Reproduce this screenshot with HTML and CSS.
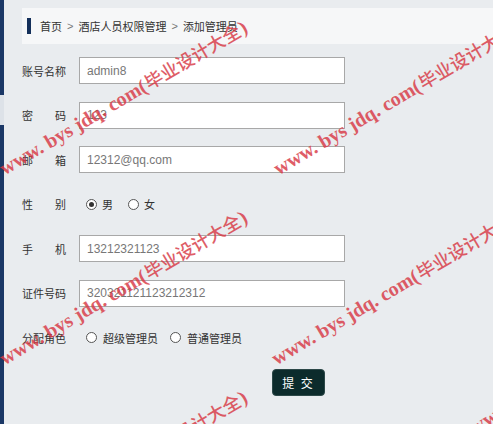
FILE: index.html
```html
<!DOCTYPE html>
<html lang="zh-CN">
<head>
<meta charset="utf-8">
<title>添加管理员</title>
<link rel="stylesheet" href="styles.css">
</head>
<body>
<div class="page">
  <div class="strip">
    <div class="strip-top"></div>
    <div class="strip-gap"></div>
    <div class="strip-bottom"></div>
  </div>
  <div class="main">
    <div class="crumbs">
      <span class="crumb-mark"></span>
      <span>首页</span><span class="sep">&gt;</span><span>酒店人员权限管理</span><span class="sep">&gt;</span><span>添加管理员</span>
    </div>
    <form class="form">
      <div class="row">
        <label class="lbl">账号名称</label>
        <input class="field" type="text" value="admin8">
      </div>
      <div class="row">
        <label class="lbl">密码</label>
        <input class="field" type="text" value="123">
      </div>
      <div class="row">
        <label class="lbl">邮箱</label>
        <input class="field" type="text" value="12312@qq.com">
      </div>
      <div class="row">
        <label class="lbl">性别</label>
        <div class="choices">
          <span class="radio checked"></span><span class="opt">男</span>
          <span class="radio"></span><span class="opt">女</span>
        </div>
      </div>
      <div class="row">
        <label class="lbl">手机</label>
        <input class="field" type="text" value="13212321123">
      </div>
      <div class="row">
        <label class="lbl">证件号码</label>
        <input class="field" type="text" value="320321121123212312">
      </div>
      <div class="row">
        <label class="lbl">分配角色</label>
        <div class="choices roles">
          <span class="radio"></span><span class="opt">超级管理员</span>
          <span class="radio"></span><span class="opt">普通管理员</span>
        </div>
      </div>
      <div class="actions">
        <button class="submit" type="button">提 交</button>
      </div>
    </form>
  </div>
  <div class="watermarks">
    <span class="wm wm-a">www. bys jdq. com(<span class="cjk">毕业设计大全</span>)</span>
    <span class="wm wm-b">www. bys jdq. com(<span class="cjk">毕业设计大全</span>)</span>
    <span class="wm wm-c">www. bys jdq. com(<span class="cjk">毕业设计大全</span>)</span>
    <span class="wm wm-d">www. bys jdq. com(<span class="cjk">毕业设计大全</span>)</span>
    <span class="wm wm-e">www. bys jdq. com(<span class="cjk">毕业设计大全</span>)</span>
    <span class="wm wm-f">www. bys jdq. com(<span class="cjk">毕业设计大全</span>)</span>
  </div>
</div>
</body>
</html>
```
FILE: styles.css
```css
html, body {
  margin: 0;
  padding: 0;
}
body {
  width: 493px;
  height: 424px;
  overflow: hidden;
  background: #e9ecef;
  font-family: "Noto Sans CJK SC", "Liberation Sans", sans-serif;
  font-size: 11px;
  color: #333;
}
.page {
  position: relative;
  display: flex;
  width: 493px;
  height: 424px;
  overflow: hidden;
}
.strip {
  width: 4px;
  display: flex;
  flex-direction: column;
  flex-shrink: 0;
}
.strip-top {
  height: 95px;
  background: #1b3866;
}
.strip-gap {
  height: 30px;
  background: #dde2e8;
}
.strip-bottom {
  flex: 1;
  background: #1b3866;
}
.main {
  flex: 1;
  padding: 8px 0 0 18px;
}
.crumbs {
  height: 36px;
  background: #f6f7f8;
  display: flex;
  align-items: center;
  padding-left: 5px;
  color: #333;
}
.crumb-mark {
  width: 4px;
  height: 16px;
  background: #14305a;
  margin-right: 9px;
}
.sep {
  color: #777;
  margin: 0 5px;
  font-family: "Liberation Sans", sans-serif;
}
.form {
  margin: 13px 0 0 0;
  display: flex;
  flex-direction: column;
  gap: 17.5px;
}
.row {
  display: flex;
  align-items: center;
  height: 27px;
}
.lbl {
  width: 44px;
  margin-right: 13px;
  text-align: justify;
  text-align-last: justify;
  color: #333;
  white-space: nowrap;
}
.field {
  box-sizing: border-box;
  width: 266px;
  height: 27px;
  margin: 0;
  border: 1px solid #a8a8a8;
  background: #fff;
  padding: 0 7px;
  font-family: "Liberation Sans", sans-serif;
  font-size: 12px;
  color: #777;
  outline: none;
}
.choices {
  display: flex;
  align-items: center;
  padding-left: 7px;
}
.radio {
  box-sizing: border-box;
  width: 11px;
  height: 11px;
  border: 1px solid #555;
  border-radius: 50%;
  background: #fff;
  display: flex;
  align-items: center;
  justify-content: center;
  margin-right: 5px;
}
.radio.checked::after {
  content: "";
  width: 5px;
  height: 5px;
  border-radius: 50%;
  background: #333;
}
.opt {
  margin-right: 15px;
  color: #333;
}
.roles .radio {
  margin-right: 6px;
}
.roles .opt {
  margin-right: 12px;
}
.actions {
  padding-left: 250px;
  margin-top: 0.5px;
}
.submit {
  width: 53px;
  height: 27px;
  border: 1px solid #2c4848;
  border-radius: 4px;
  background: #0c2b2c;
  color: #fff;
  font-family: "Noto Sans CJK SC", sans-serif;
  font-size: 12px;
  padding: 0;
  letter-spacing: 2px;
}
.watermarks {
  position: absolute;
  left: 0;
  top: 0;
  width: 493px;
  height: 424px;
  overflow: hidden;
  pointer-events: none;
}
.wm {
  position: absolute;
  white-space: nowrap;
  font-family: "Liberation Serif", "Noto Sans CJK SC", serif;
  font-weight: bold;
  font-size: 20px;
  line-height: 20px;
  color: #d83a46;
  opacity: 0.82;
  transform-origin: 0 100%;
  transform: rotate(-30.5deg);
}
.wm .cjk {
  font-family: "Noto Sans CJK SC", sans-serif;
  font-weight: 500;
  font-size: 18px;
  margin: 0 1px;
}
.wm-a { left: 6px; top: 157px; }
.wm-b { left: 280px; top: 157px; }
.wm-c { left: 6px; top: 347px; }
.wm-d { left: 278px; top: 347px; }
.wm-e { left: 6px; top: 527px; }
.wm-f { left: 476px; top: 416px; }
```
